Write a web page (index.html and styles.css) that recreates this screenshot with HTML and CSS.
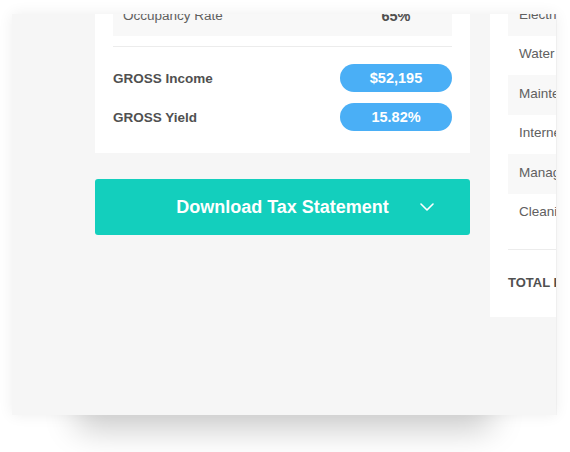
FILE: index.html
```html
<!DOCTYPE html>
<html lang="en">
<head>
<meta charset="utf-8">
<title>Tax Statement</title>
<link rel="stylesheet" href="styles.css">
</head>
<body>
<div class="frame-wrap">
  <div class="frame-shadow" aria-hidden="true"></div>
  <div class="frame">
    <div class="content">
      <div class="col-left">
        <div class="card card-left">
          <div class="kv-row">
            <span class="kv-label">Occupancy Rate</span>
            <span class="kv-value">65%</span>
          </div>
          <div class="divider"></div>
          <div class="metrics">
            <div class="metric">
              <span class="metric-label">GROSS Income</span>
              <span class="pill">$52,195</span>
            </div>
            <div class="metric">
              <span class="metric-label">GROSS Yield</span>
              <span class="pill">15.82%</span>
            </div>
          </div>
        </div>
        <button class="download" type="button">
          <span class="download-text">Download Tax Statement</span>
          <svg class="chev" width="14" height="8" viewBox="0 0 14 8" aria-hidden="true">
            <path d="M1 1 L7 7 L13 1" fill="none" stroke="#ffffff" stroke-width="1.6" stroke-linecap="round" stroke-linejoin="round"/>
          </svg>
        </button>
      </div>
      <div class="card card-right">
        <div class="exp-row shade">Electricity</div>
        <div class="exp-row">Water</div>
        <div class="exp-row shade">Maintenance</div>
        <div class="exp-row">Internet</div>
        <div class="exp-row shade">Management</div>
        <div class="exp-row">Cleaning</div>
        <div class="divider divider-right"></div>
        <div class="total-row">TOTAL Expenses</div>
      </div>
    </div>
  </div>
</div>
</body>
</html>
```
FILE: styles.css
```css
html {
  margin: 0;
  padding: 0;
  background: #ffffff;
}

body {
  margin: 0;
  padding: 14px 0 37px 12px;
  min-height: 452px;
  box-sizing: border-box;
  font-family: "Liberation Sans", Arial, Helvetica, sans-serif;
}

.frame-wrap {
  position: relative;
  width: 544px;
  height: 401px;
}

.frame-shadow {
  position: absolute;
  left: 62px;
  right: 62px;
  bottom: 6px;
  height: 30px;
  border-radius: 30px;
  background: #d6d6d6;
  box-shadow: 0 20px 32px rgba(0, 0, 0, 0.22);
}

.frame {
  position: relative;
  width: 544px;
  height: 401px;
  overflow: hidden;
  background: #f6f6f6;
  box-shadow: 0 0 14px rgba(0, 0, 0, 0.07), 1px 0 0 rgba(0, 0, 0, 0.03);
}

.content {
  display: flex;
  align-items: flex-start;
  gap: 20px;
  padding-left: 83px;
  margin-top: -37px;
}

.col-left {
  flex: 0 0 375px;
  display: flex;
  flex-direction: column;
  gap: 26px;
}

.card {
  background: #ffffff;
  box-sizing: border-box;
}

.card-left {
  padding: 18px 18px 22px;
}

.kv-row {
  height: 41px;
  background: #f8f8f8;
  display: flex;
  align-items: center;
  justify-content: space-between;
  padding-left: 10px;
}

.kv-label {
  font-size: 13.5px;
  color: #606060;
}

.kv-value {
  width: 112px;
  text-align: center;
  font-size: 14.5px;
  font-weight: bold;
  color: #505050;
}

.divider {
  height: 1px;
  background: #ececec;
  margin-top: 10px;
}

.metrics {
  padding-top: 17px;
  display: flex;
  flex-direction: column;
  gap: 11px;
}

.metric {
  display: flex;
  align-items: center;
  justify-content: space-between;
  height: 28px;
}

.metric-label {
  font-size: 13.5px;
  font-weight: bold;
  color: #505050;
}

.pill {
  width: 112px;
  height: 28px;
  border-radius: 14px;
  background: #4aaff6;
  color: #ffffff;
  font-size: 14.5px;
  font-weight: bold;
  display: flex;
  align-items: center;
  justify-content: center;
}

.download {
  position: relative;
  height: 56px;
  border: none;
  border-radius: 3px;
  background: #13cfbd;
  color: #ffffff;
  font-family: inherit;
  font-size: 18px;
  font-weight: bold;
  padding: 0;
  display: flex;
  align-items: center;
  justify-content: center;
}

.chev {
  position: absolute;
  right: 36px;
  top: 24px;
}

.card-right {
  flex: 0 0 375px;
  padding: 19px 18px 25px;
}

.exp-row {
  height: 39.5px;
  display: flex;
  align-items: center;
  padding-left: 11px;
  padding-bottom: 3px;
  box-sizing: border-box;
  font-size: 13.5px;
  color: #606060;
  white-space: nowrap;
}

.exp-row.shade {
  background: #f8f8f8;
}

.divider-right {
  margin-top: 16px;
}

.total-row {
  padding-top: 24px;
  line-height: 18px;
  font-size: 13px;
  font-weight: bold;
  color: #505050;
  white-space: nowrap;
}
```
